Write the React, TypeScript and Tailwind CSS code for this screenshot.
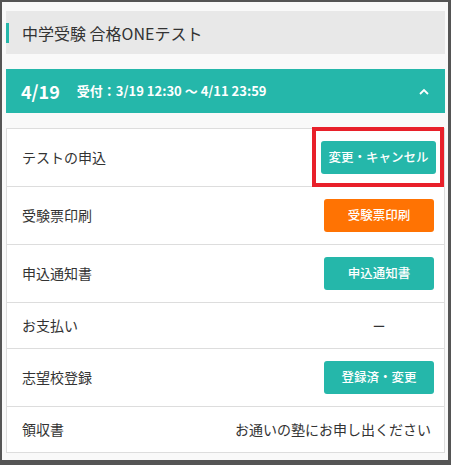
import type { ReactNode } from "react";

const font = { fontFamily: '"Noto Sans CJK JP", "Noto Sans", sans-serif' };

type Row = {
  label: string;
  tall: boolean;
  right: ReactNode;
};

function ActionButton({
  children,
  tone = "teal",
  wide = false,
}: {
  children: ReactNode;
  tone?: "teal" | "orange";
  wide?: boolean;
}) {
  const toneClass = tone === "orange" ? "bg-[#ff7303]" : "bg-[#25b7aa]";
  return (
    <button
      className={`flex h-[33px] items-center justify-center rounded-[3px] text-[12.5px] font-medium text-white ${toneClass} ${
        wide ? "-mr-[2px] w-[115px]" : "w-[110px]"
      }`}
    >
      {children}
    </button>
  );
}

const rows: Row[] = [
  {
    label: "テストの申込",
    tall: true,
    right: <ActionButton wide>変更・キャンセル</ActionButton>,
  },
  {
    label: "受験票印刷",
    tall: true,
    right: <ActionButton tone="orange">受験票印刷</ActionButton>,
  },
  { label: "申込通知書", tall: true, right: <ActionButton>申込通知書</ActionButton> },
  {
    label: "お支払い",
    tall: false,
    right: <span className="block w-[110px] text-center text-[13px]">ー</span>,
  },
  { label: "志望校登録", tall: true, right: <ActionButton>登録済・変更</ActionButton> },
  {
    label: "領収書",
    tall: false,
    right: <span className="pr-[3px] text-[14px]">お通いの塾にお申し出ください</span>,
  },
];

export default function App() {
  return (
    <div
      className="relative h-[465px] w-[451px] border-t-2 border-r-[3px] border-b-[5px] border-l-2 border-[#555] bg-[#f9f9f9] pt-[9px] pr-[3px] pl-[4px] text-[#333]"
      style={font}
    >
      <div className="flex h-[43px] items-center bg-[#e8e8e8]">
        <div className="h-[20px] w-[3px] bg-[#25b7aa]" />
        <h1 className="pl-[13px] text-[16px] leading-none">中学受験 合格ONEテスト</h1>
      </div>

      <div className="mt-[15px] flex h-[44px] items-center bg-[#25b7aa] pr-[16px] pl-[15px] font-bold text-white">
        <span className="text-[18px]">4/19</span>
        <span className="ml-[17px] text-[13px]">受付：3/19 12:30 〜 4/11 23:59</span>
        <svg
          className="ml-auto"
          width="10"
          height="7"
          viewBox="0 0 10 7"
          fill="none"
          stroke="white"
          strokeWidth="1.8"
        >
          <polyline points="1,6 5,2 9,6" />
        </svg>
      </div>

      <div className="mt-[15px] border border-b-0 border-[#ddd] bg-white">
        {rows.map((row) => (
          <div
            key={row.label}
            className={`flex items-center justify-between border-b border-[#ddd] pr-[10px] pl-[15px] ${
              row.tall ? "h-[58px]" : "h-[46px]"
            }`}
          >
            <span className="text-[14px]">{row.label}</span>
            {row.right}
          </div>
        ))}
      </div>

      <div className="pointer-events-none absolute top-[125px] left-[310px] h-[60px] w-[132px] border-[4px] border-[#e8202a]" />
    </div>
  );
}
